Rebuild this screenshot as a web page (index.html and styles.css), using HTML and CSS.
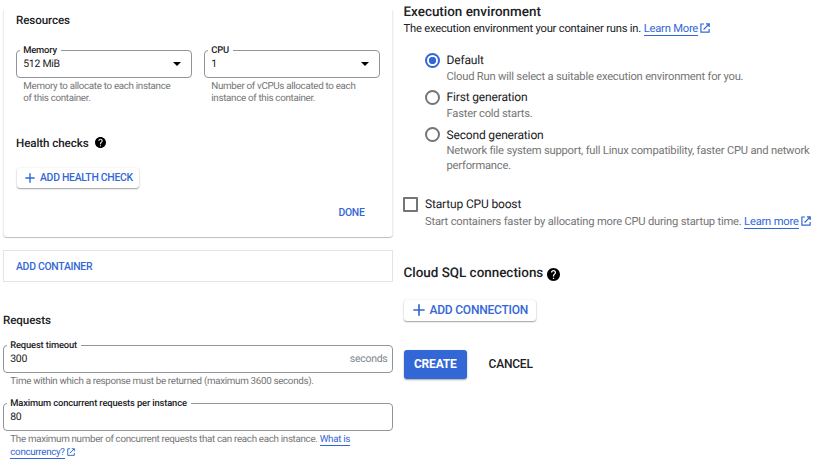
FILE: index.html
```html
<!DOCTYPE html>
<html lang="en">
<head>
<meta charset="utf-8">
<title>Create service</title>
<link rel="stylesheet" href="styles.css">
</head>
<body>
<svg class="defs" aria-hidden="true">
  <symbol id="plus" viewBox="0 0 10 10"><path d="M5 .3v9.4M.3 5h9.4" fill="none" stroke="currentColor" stroke-width="1.4"/></symbol>
  <symbol id="external" viewBox="0 0 10 10"><path d="M4 1H.9v8.2h8.2V6M6 .9h3.2v3.2M9 1.1 3.6 6.5" fill="none" stroke="currentColor" stroke-width="1.2"/></symbol>
  <symbol id="help" viewBox="2 2 20 20"><path fill="currentColor" d="M12 2C6.48 2 2 6.48 2 12s4.48 10 10 10 10-4.48 10-10S17.52 2 12 2zm1 17h-2v-2h2v2zm2.07-7.75-.9.92C13.45 12.9 13 13.5 13 15h-2v-.5c0-1.1.45-2.1 1.17-2.83l1.24-1.26c.37-.36.59-.86.59-1.41 0-1.1-.9-2-2-2s-2 .9-2 2H8c0-2.21 1.79-4 4-4s4 1.79 4 4c0 .88-.36 1.68-.93 2.25z"/></symbol>
</svg>
<main class="page">
  <section class="left">
    <div class="card">
      <h3 class="title">Resources</h3>
      <div class="fields">
        <div>
          <div class="field"><span class="label">Memory</span><span class="value">512 MiB</span><i class="caret"></i></div>
          <p class="hint">Memory to allocate to each instance<br>of this container.</p>
        </div>
        <div>
          <div class="field"><span class="label">CPU</span><span class="value">1</span><i class="caret"></i></div>
          <p class="hint">Number of vCPUs allocated to each<br>instance of this container.</p>
        </div>
      </div>
      <h3 class="title health">Health checks <svg class="help"><use href="#help"/></svg></h3>
      <button class="btn raised"><svg class="plus"><use href="#plus"/></svg>ADD HEALTH CHECK</button>
      <div class="done"><button class="btn">DONE</button></div>
    </div>
    <div class="add-container"><button class="btn">ADD CONTAINER</button></div>
    <h3 class="title requests">Requests</h3>
    <div class="field"><span class="label">Request timeout</span><span class="value">300</span><span class="suffix">seconds</span></div>
    <p class="hint">Time within which a response must be returned (maximum 3600 seconds).</p>
    <div class="field second"><span class="label">Maximum concurrent requests per instance</span><span class="value">80</span></div>
    <p class="hint">The maximum number of concurrent requests that can reach each instance. <a>What is</a><br><a>concurrency?</a><svg class="ext"><use href="#external"/></svg></p>
  </section>
  <section class="right">
    <h2 class="heading">Execution environment</h2>
    <p class="text">The execution environment your container runs in. <a>Learn More</a><svg class="ext"><use href="#external"/></svg></p>
    <div class="options">
      <div class="option"><i class="radio on"></i><div><div class="name">Default</div><p class="desc">Cloud Run will select a suitable execution environment for you.</p></div></div>
      <div class="option"><i class="radio"></i><div><div class="name">First generation</div><p class="desc">Faster cold starts.</p></div></div>
      <div class="option"><i class="radio"></i><div><div class="name">Second generation</div><p class="desc">Network file system support, full Linux compatibility, faster CPU and network<br>performance.</p></div></div>
    </div>
    <div class="option boost"><i class="checkbox"></i><div><div class="name">Startup CPU boost</div><p class="desc">Start containers faster by allocating more CPU during startup time. <a>Learn more</a><svg class="ext"><use href="#external"/></svg></p></div></div>
    <h2 class="heading sql">Cloud SQL connections <svg class="help"><use href="#help"/></svg></h2>
    <button class="btn raised big"><svg class="plus"><use href="#plus"/></svg>ADD CONNECTION</button>
    <div class="actions"><button class="btn create">CREATE</button><button class="btn cancel">CANCEL</button></div>
  </section>
</main>
</body>
</html>
```
FILE: styles.css
```css
* { box-sizing: border-box; }
body { margin: 0; background: #fff; color: #202124; font-family: Roboto, sans-serif; text-rendering: geometricPrecision; }
h2, h3, p { margin: 0; font-weight: 400; white-space: nowrap; }
.defs { position: absolute; width: 0; height: 0; }
.page { display: flex; gap: 10.5px; width: 820px; height: 465px; padding-left: 3px; overflow: hidden; }
.left { width: 390px; flex: none; padding-top: 10px; }
.right { width: 416px; flex: none; }

.card {
  height: 227px;
  padding: 2px 13px 0;
  border: solid #ececec;
  border-width: 0 1px;
  border-radius: 0 0 4px 4px;
  box-shadow: 0 1px 1px #bdbdbd;
}
.title { display: flex; align-items: center; height: 16px; font-size: 11.6px; font-weight: 500; line-height: 16px; letter-spacing: -.08px; }
.fields { display: grid; grid-template-columns: 176px 176px; gap: 12px; margin: 22px 0 0 -1px; }
.card > .title, .card > .btn { margin-left: -1px; }
.field {
  position: relative;
  display: flex;
  align-items: center;
  justify-content: space-between;
  height: 28px;
  padding: 0 4.5px 0 6.2px;
  border: 1px solid #919499;
  border-radius: 4px;
  font-size: 10.5px;
  line-height: 14px;
  letter-spacing: -.28px;
}
.label {
  position: absolute;
  top: -6px;
  left: 3px;
  padding: 0 4px 0 3.2px;
  background: #fff;
  font-size: 9.4px;
  font-weight: 500;
  line-height: 12px;
  letter-spacing: -.15px;
}
.suffix { color: #80868b; }
.caret { margin-right: 6px; border: solid transparent; border-width: 4.5px 4.5px 0; border-top-color: #000; }
.hint { margin-top: 3.2px; padding-left: 7.3px; color: #757575; font-size: 9.8px; line-height: 12.3px; letter-spacing: -.318px; }
.card > .health { margin-top: 28.8px; }
.health .help { width: 11px; height: 11px; margin-left: 6.5px; color: #000; }

.btn {
  display: flex;
  align-items: center;
  padding: 0;
  border: 0;
  background: none;
  color: #3367d6;
  font: 500 10.4px/16px Roboto, sans-serif;
  letter-spacing: -.27px;
  white-space: nowrap;
}
.card > .raised { margin: 17px 0 0 0; }
.raised { width: 122px; height: 20px; padding-left: 8px; border-radius: 3px; background: #fff; box-shadow: 0 1px 1.5px rgba(0,0,0,.36), 0 0 2px rgba(0,0,0,.1); }
.plus { width: 10px; height: 10px; margin-right: 5px; }
.done { display: flex; justify-content: flex-end; margin: 17px 14.5px 0 0; }
.add-container { display: flex; align-items: center; height: 32px; margin-top: 13px; padding: 1px 0 0 12px; border: 1px solid #e4e4e4; }
.requests { margin: 30px 0 17px; }
.second { margin-top: 14.8px; }

a { border-bottom: 1px solid #3367d6; color: #3367d6; }
.ext { width: 8px; height: 8px; margin-left: 2px; color: #3367d6; vertical-align: -1px; }

.heading { display: flex; align-items: center; height: 18px; margin-top: 3.5px; font-size: 13.43px; font-weight: 500; line-height: 18px; }
.text { margin-top: -.5px; font-size: 11.2px; line-height: 15px; letter-spacing: -.21px; }
.right .ext { width: 10px; height: 10px; margin-left: 2px; }
.options { display: grid; gap: 5.6px; margin: 16px 0 0 21px; }
.option { display: flex; }
.name { height: 16px; font-size: 12px; line-height: 16px; letter-spacing: -.16px; }
.desc { margin-top: 1.5px; color: #757575; font-size: 11.2px; line-height: 14.3px; letter-spacing: -.21px; }
.radio, .checkbox { flex: none; width: 15px; height: 15px; margin: .5px 7px 0 0; border: 1.6px solid #757575; }
.radio { border-width: 2px; border-radius: 50%; }
.radio.on { border-color: #3367d6; background: radial-gradient(circle, #3367d6 3.4px, transparent 4px); }
.checkbox { margin-left: -.5px; border-width: 2px; border-radius: 1px; }
.boost { margin-top: 23.5px; }
.boost .desc { margin-top: 3px; }
.sql { margin-top: 35.5px; }
.sql .help { width: 13px; height: 13px; margin-left: 4px; color: #000; }
.big { width: 132.5px; height: 21px; margin-top: 16.5px; padding-left: 9px; font-size: 12px; letter-spacing: -.22px; }
.big .plus { width: 12px; height: 12px; }
.actions { display: flex; align-items: center; gap: 21.5px; margin-top: 29px; }
.actions .btn { font-size: 12px; letter-spacing: -.2px; }
.actions .create { justify-content: center; width: 63.5px; height: 29px; border-radius: 3px; background: #3367d6; color: #fff; font-weight: 700; box-shadow: 0 1px 2px rgba(0,0,0,.35); }
.actions .cancel { color: #202124; }
```
